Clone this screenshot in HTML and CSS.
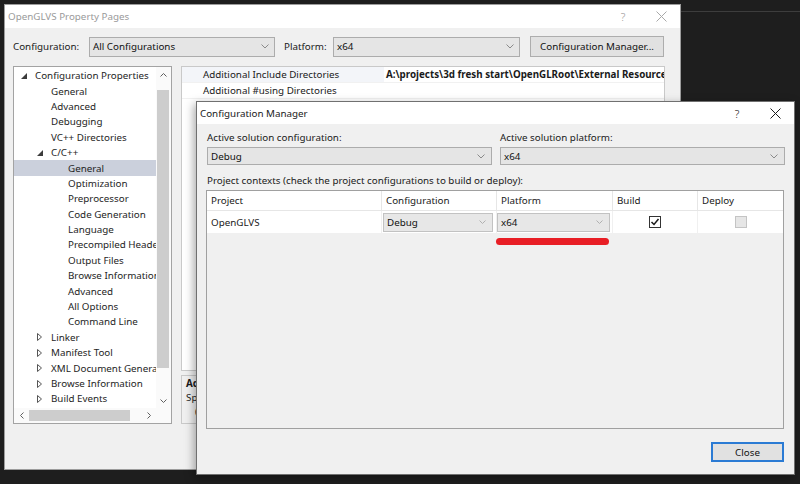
FILE: index.html
```html
<!DOCTYPE html>
<html lang="en">
<head>
    <meta charset="UTF-8">
    <title>OpenGLVS Property Pages</title>
    <link rel="stylesheet" href="styles.css">
</head>
<body>

<div class="desk-line"></div>

<!-- property pages window (inactive, behind) -->
<div class="window props">
    <div class="titlebar inactive">
        <span class="title">OpenGLVS Property Pages</span>
        <span class="cap-btn help">?</span>
        <span class="cap-btn"><svg width="11" height="11"><path d="M0.5 0.5 L10.5 10.5 M10.5 0.5 L0.5 10.5" stroke="#a8a8a8" stroke-width="1"/></svg></span>
    </div>

    <div class="config-row">
        <span class="lbl lbl-config">Configuration:</span>
        <div class="combo combo-config">
            <span>All Configurations</span>
            <svg width="8" height="5"><polyline points="0.5,0.5 4,4 7.5,0.5" fill="none" stroke="#8a8a8a"/></svg>
        </div>
        <span class="lbl lbl-platform">Platform:</span>
        <div class="combo combo-platform">
            <span>x64</span>
            <svg width="8" height="5"><polyline points="0.5,0.5 4,4 7.5,0.5" fill="none" stroke="#8a8a8a"/></svg>
        </div>
        <div class="btn btn-cm">Configuration Manager...</div>
    </div>

    <div class="pp-main">
        <div class="tree">
            <div class="tree-list">
                <div class="node l0"><span class="exp"><svg width="6" height="6"><polygon points="6,0 6,6 0,6" fill="#3c3c3c"/></svg></span>Configuration Properties</div>
                <div class="node l1"><span class="exp"></span>General</div>
                <div class="node l1"><span class="exp"></span>Advanced</div>
                <div class="node l1"><span class="exp"></span>Debugging</div>
                <div class="node l1"><span class="exp"></span>VC++ Directories</div>
                <div class="node l1"><span class="exp"><svg width="6" height="6"><polygon points="6,0 6,6 0,6" fill="#3c3c3c"/></svg></span>C/C++</div>
                <div class="node l2 sel"><span class="exp"></span>General</div>
                <div class="node l2"><span class="exp"></span>Optimization</div>
                <div class="node l2"><span class="exp"></span>Preprocessor</div>
                <div class="node l2"><span class="exp"></span>Code Generation</div>
                <div class="node l2"><span class="exp"></span>Language</div>
                <div class="node l2"><span class="exp"></span>Precompiled Headers</div>
                <div class="node l2"><span class="exp"></span>Output Files</div>
                <div class="node l2"><span class="exp"></span>Browse Information</div>
                <div class="node l2"><span class="exp"></span>Advanced</div>
                <div class="node l2"><span class="exp"></span>All Options</div>
                <div class="node l2"><span class="exp"></span>Command Line</div>
                <div class="node l1"><span class="exp"><svg width="5" height="8"><polygon points="0.5,0.5 4.5,4 0.5,7.5" fill="none" stroke="#555"/></svg></span>Linker</div>
                <div class="node l1"><span class="exp"><svg width="5" height="8"><polygon points="0.5,0.5 4.5,4 0.5,7.5" fill="none" stroke="#555"/></svg></span>Manifest Tool</div>
                <div class="node l1"><span class="exp"><svg width="5" height="8"><polygon points="0.5,0.5 4.5,4 0.5,7.5" fill="none" stroke="#555"/></svg></span>XML Document Generator</div>
                <div class="node l1"><span class="exp"><svg width="5" height="8"><polygon points="0.5,0.5 4.5,4 0.5,7.5" fill="none" stroke="#555"/></svg></span>Browse Information</div>
                <div class="node l1"><span class="exp"><svg width="5" height="8"><polygon points="0.5,0.5 4.5,4 0.5,7.5" fill="none" stroke="#555"/></svg></span>Build Events</div>
            </div>
            <div class="vscroll">
                <span class="sb-arrow"><svg width="7" height="4"><polyline points="0.5,3.5 3.5,0.5 6.5,3.5" fill="none" stroke="#606060"/></svg></span>
                <span class="vthumb"></span>
                <span class="sb-fill"></span>
                <span class="sb-arrow"><svg width="7" height="4"><polyline points="0.5,0.5 3.5,3.5 6.5,0.5" fill="none" stroke="#606060"/></svg></span>
            </div>
            <div class="hscroll">
                <span class="sb-arrow"><svg width="4" height="7"><polyline points="3.5,0.5 0.5,3.5 3.5,6.5" fill="none" stroke="#606060"/></svg></span>
                <span class="hthumb"></span>
                <span class="sb-fill"></span>
                <span class="sb-arrow"><svg width="4" height="7"><polyline points="0.5,0.5 3.5,3.5 0.5,6.5" fill="none" stroke="#606060"/></svg></span>
            </div>
            <div class="corner"></div>
        </div>

        <div class="pp-right">
            <div class="prop-grid">
                <div class="prop-row sel">
                    <span class="pname">Additional Include Directories</span>
                    <span class="pval">A:\projects\3d fresh start\OpenGLRoot\External Resources\include</span>
                </div>
                <div class="prop-row">
                    <span class="pname">Additional #using Directories</span>
                    <span class="pval"></span>
                </div>
            </div>
            <div class="desc">
                <div class="desc-title">Additional Include Directories</div>
                <div>Specifies one or more directories to add to the include path; separate with semi-colons if more than one.</div>
                <div class="desc-sw">(/I[path])</div>
            </div>
        </div>
    </div>
</div>

<!-- configuration manager dialog (active, on top) -->
<div class="window cm">
    <div class="titlebar">
        <span class="title">Configuration Manager</span>
        <span class="cap-btn help">?</span>
        <span class="cap-btn"><svg width="11" height="11"><path d="M0.5 0.5 L10.5 10.5 M10.5 0.5 L0.5 10.5" stroke="#1a1a1a" stroke-width="1"/></svg></span>
    </div>

    <div class="cm-body">
        <div class="cm-top">
            <div>
                <div class="field-lbl">Active solution configuration:</div>
                <div class="combo wide">
                    <span>Debug</span>
                    <svg width="8" height="5"><polyline points="0.5,0.5 4,4 7.5,0.5" fill="none" stroke="#8a8a8a"/></svg>
                </div>
            </div>
            <div>
                <div class="field-lbl">Active solution platform:</div>
                <div class="combo wide">
                    <span>x64</span>
                    <svg width="8" height="5"><polyline points="0.5,0.5 4,4 7.5,0.5" fill="none" stroke="#8a8a8a"/></svg>
                </div>
            </div>
        </div>

        <div class="ctx-lbl">Project contexts (check the project configurations to build or deploy):</div>

        <div class="ctx-table">
            <div class="ctx-head">
                <span>Project</span>
                <span>Configuration</span>
                <span>Platform</span>
                <span>Build</span>
                <span class="last">Deploy</span>
            </div>
            <div class="ctx-row">
                <span class="cell">OpenGLVS</span>
                <span class="cell"><span class="combo cell-combo cc-config"><span>Debug</span><svg width="7" height="4"><polyline points="0.5,0.5 3.5,3.5 6.5,0.5" fill="none" stroke="#b0b0b0"/></svg></span></span>
                <span class="cell"><span class="combo cell-combo cc-platform"><span>x64</span><svg width="7" height="4"><polyline points="0.5,0.5 3.5,3.5 6.5,0.5" fill="none" stroke="#b0b0b0"/></svg></span></span>
                <span class="cell center"><span class="check"><svg width="10" height="10"><polyline points="1.5,5 4,7.5 8.5,2" fill="none" stroke="#1a1a1a" stroke-width="1.5"/></svg></span></span>
                <span class="cell center last"><span class="check disabled"></span></span>
            </div>
            <div class="red-mark"></div>
        </div>

        <div class="cm-footer">
            <div class="btn btn-close">Close</div>
        </div>
    </div>
</div>

</body>
</html>
```

FILE: styles.css
```css
* {
    box-sizing: border-box;
}

body {
    position: relative;
    width: 800px;
    height: 484px;
    margin: 0;
    overflow: hidden;
    background-color: #1e1e1e;
    font-family: "Noto Sans", "DejaVu Sans", sans-serif;
    font-size: 9.8px;
    color: #1a1a1a;
}

.desk-line {
    position: absolute;
    left: 681px;
    right: 0;
    top: 11px;
    height: 1px;
    background-color: #3d3d3d;
}

/* windows */

.window {
    position: absolute;
    display: flex;
    flex-direction: column;
    background-color: #f0f0f0;
    border: 1px solid #9c9c9c;
}

.props {
    left: 4px;
    top: 4px;
    width: 677px;
    height: 466px;
}

.cm {
    left: 196px;
    top: 101px;
    width: 599px;
    height: 374px;
    border-color: #707070;
    box-shadow: -2px 3px 9px rgba(0, 0, 0, 0.35);
}

.titlebar {
    display: flex;
    align-items: center;
    flex-shrink: 0;
    height: 23px;
    padding-left: 3px;
    background-color: #fff;
}

.cm .titlebar {
    height: 22px;
}

.titlebar .title {
    flex: 1;
    white-space: nowrap;
}

.inactive {
    color: #9a9a9a;
}

.cap-btn {
    display: flex;
    align-items: center;
    justify-content: center;
    width: 38px;
    height: 100%;
}

.cap-btn.help {
    font-size: 11px;
    font-weight: 300;
}

/* shared controls */

.combo {
    display: flex;
    align-items: center;
    justify-content: space-between;
    height: 20px;
    padding: 0 5px 0 3px;
    background-color: #e5e5e5;
    border: 1px solid #acacac;
    color: #111;
    white-space: nowrap;
}

.btn {
    display: flex;
    align-items: center;
    justify-content: center;
    background-color: #e1e1e1;
    border: 1px solid #adadad;
    color: #111;
}

/* property pages */

.config-row {
    display: flex;
    align-items: center;
    height: 29px;
    padding: 8px 0 0 8px;
    flex-shrink: 0;
}

.lbl-config {
    width: 76px;
}

.combo-config {
    width: 186px;
}

.lbl-platform {
    width: 49px;
    margin-left: 9px;
}

.combo-platform {
    width: 187px;
}

.btn-cm {
    width: 134px;
    height: 21px;
    margin-left: 10px;
}

.pp-main {
    display: flex;
    gap: 9px;
    margin-top: 9px;
    padding-left: 8px;
}

.tree {
    display: grid;
    grid-template-columns: 1fr 15px;
    grid-template-rows: 1fr 15px;
    width: 159px;
    height: 358px;
    background-color: #fff;
    border: 1px solid #a3a3a3;
}

.tree-list {
    overflow: hidden;
    white-space: nowrap;
    padding-top: 1px;
    color: #1e1e1e;
}

.node {
    display: flex;
    align-items: center;
    height: 15.4px;
}

.node.l1 {
    padding-left: 16px;
}

.node.l2 {
    padding-left: 33px;
}

.node.sel {
    background-color: #cbd0dc;
}

.exp {
    display: flex;
    align-items: center;
    flex-shrink: 0;
    width: 21px;
    padding-left: 7px;
}

.vscroll {
    display: flex;
    flex-direction: column;
    background-color: #fafafa;
}

.hscroll {
    display: flex;
    background-color: #fafafa;
}

.sb-arrow {
    display: flex;
    align-items: center;
    justify-content: center;
    width: 15px;
    height: 15px;
    flex-shrink: 0;
}

.sb-fill {
    flex: 1;
}

.vthumb {
    width: 12px;
    height: 278px;
    margin: 8px 2px 0 1px;
    background-color: #cdcdcd;
}

.hthumb {
    width: 101px;
    height: 11px;
    margin-top: 2px;
    background-color: #cdcdcd;
}

.corner {
    background-color: #fafafa;
}

.pp-right {
    display: flex;
    flex-direction: column;
    gap: 4px;
    width: 484px;
}

.prop-grid {
    height: 305px;
    background-color: #fff;
    border: 1px solid #c9c9c9;
}

.prop-row {
    display: flex;
    height: 16px;
    align-items: center;
    white-space: nowrap;
    border-bottom: 1px solid #f1f1f1;
}

.pname {
    flex-shrink: 0;
    width: 202px;
    height: 100%;
    display: flex;
    align-items: center;
    padding-left: 21px;
}

.prop-row.sel .pname {
    background-color: #f3f5f9;
}

.pval {
    overflow: hidden;
    padding-left: 2px;
    font-weight: bold;
}

.desc {
    height: 49px;
    padding: 1px 4px;
    line-height: 14px;
    overflow: hidden;
    white-space: nowrap;
    background-color: #f0f0f0;
    border: 1px solid #c9c9c9;
}

.desc-title {
    font-weight: bold;
}

.desc-sw {
    padding-left: 9px;
}

/* configuration manager */

.cm-body {
    display: flex;
    flex-direction: column;
    flex: 1;
    padding: 7px 10px 0 10px;
}

.cm-top {
    display: grid;
    grid-template-columns: 285px 285px;
    column-gap: 8px;
}

.field-lbl {
    height: 13px;
    line-height: 13px;
    margin-bottom: 3px;
}

.combo.wide {
    height: 18px;
    padding-right: 6px;
}

.ctx-lbl {
    margin-top: 9px;
    line-height: 13px;
}

.ctx-table {
    position: relative;
    height: 239px;
    margin: 3px 0 0 -1px;
    background-color: #f0f0f0;
    border: 1px solid #a0a0a0;
}

.ctx-head,
.ctx-row {
    display: grid;
    grid-template-columns: 175px 115px 116px 85px 1fr;
    background-color: #fff;
}

.ctx-head {
    height: 20px;
    border-bottom: 1px solid #e6e6e6;
}

.ctx-head span {
    padding-left: 4px;
    line-height: 19px;
    border-right: 1px solid #e6e6e6;
}

.ctx-row {
    height: 22px;
}

.cell {
    display: flex;
    align-items: center;
    padding-left: 4px;
    border-right: 1px solid #f0f0f0;
}

.ctx-head .last,
.cell.last {
    border-right: none;
}

.cell.center {
    justify-content: center;
    padding-left: 0;
}

.cell-combo {
    height: 19px;
    padding-right: 6px;
    background-color: #e7e7e7;
    border-color: #c2c2c2;
}

.cc-config {
    width: 110px;
    margin-left: -3px;
}

.cc-platform {
    width: 113px;
    margin-left: -4px;
}

.check {
    display: flex;
    align-items: center;
    justify-content: center;
    width: 12px;
    height: 12px;
    background-color: #fff;
    border: 1px solid #333;
}

.check.disabled {
    background-color: #e6e6e6;
    border-color: #c4c4c4;
}

.red-mark {
    position: absolute;
    left: 289px;
    top: 47px;
    width: 113px;
    height: 7px;
    border-radius: 4px;
    background-color: #e81e25;
}

.cm-footer {
    display: flex;
    justify-content: flex-end;
    margin-top: 13px;
}

.btn-close {
    width: 73px;
    height: 20px;
    border: 2px solid #2b7bd4;
}
```
